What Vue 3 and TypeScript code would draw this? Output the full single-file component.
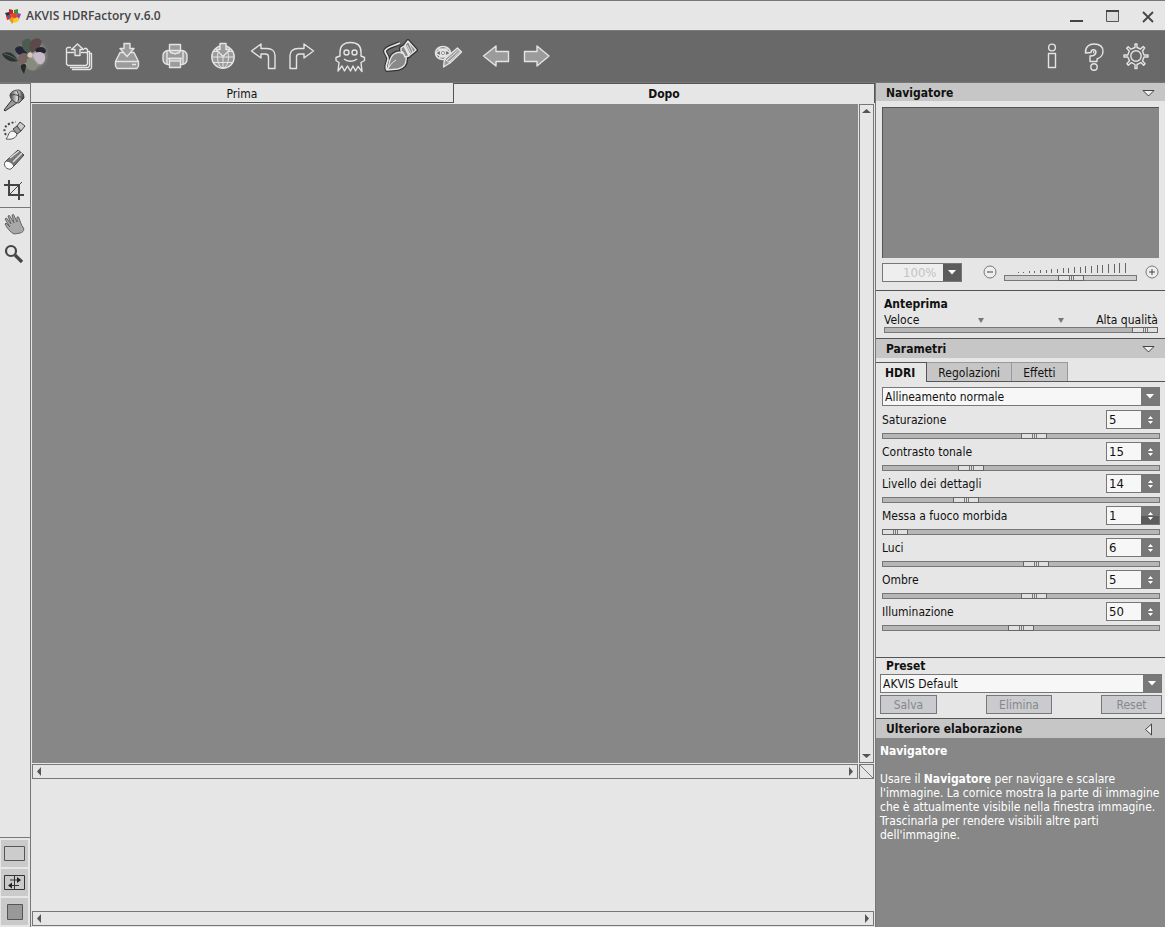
<script setup lang="ts">
import { ref } from 'vue'

interface Param {
  id: string
  label: string
  value: number
  pos: number
  pressed?: boolean
}

const params = ref<Param[]>([
  { id: 'saturation', label: 'Saturazione', value: 5, pos: 139 },
  { id: 'contrast', label: 'Contrasto tonale', value: 15, pos: 76 },
  { id: 'detail', label: 'Livello dei dettagli', value: 14, pos: 71 },
  { id: 'soft', label: 'Messa a fuoco morbida', value: 1, pos: 0, pressed: true },
  { id: 'lights', label: 'Luci', value: 6, pos: 141 },
  { id: 'shadows', label: 'Ombre', value: 5, pos: 139 },
  { id: 'illumination', label: 'Illuminazione', value: 50, pos: 126 },
])

const zoomPos = ref(54)
const quality = ref(100)
const ticks = Array.from({ length: 20 }, (_, i) => ({
  x: 1.5 + i * 5.65,
  h: i < 2 ? 1 : Math.round(1 + (i - 1) * 0.5),
}))
</script>

<template>
  <div class="app">
    <header class="titlebar">
      <svg class="logo" width="18" height="18" viewBox="0 0 18 18">
        <path d="M1 6l4-1 2 4-4 1z" fill="#333" />
        <path d="M5 2l4 1v5L5 7z" fill="#c22" />
        <path d="M10 3l4-1v5l-4 2z" fill="#2a9a3a" />
        <path d="M14 6l3 1-2 5-3-2z" fill="#a33ab0" />
        <path d="M2 9l5-1v4l-4 1z" fill="#d33" />
        <circle cx="10" cy="9" r="3" fill="#e8442a" />
        <path d="M5 12l4-2 2 3-3 4z" fill="#e89a20" />
        <path d="M9 12l5-2 1 4-5 2z" fill="#f0d020" />
        <path d="M4 8h2v3H4z" fill="#36c" />
      </svg>
      <h1 class="title">AKVIS HDRFactory v.6.0</h1>
      <div class="winbtns">
        <button aria-label="Riduci a icona"><svg width="16" height="16" viewBox="0 0 16 16"><path d="M2 13h13" stroke="#444" stroke-width="2" /></svg></button>
        <button aria-label="Ingrandisci"><svg width="16" height="16" viewBox="0 0 16 16"><path d="M2.500 3.500h12v10h-12z" fill="#dcdcdc" stroke="#555" /><path d="M2 3h13" stroke="#444" stroke-width="2" /></svg></button>
        <button aria-label="Chiudi"><svg width="16" height="16" viewBox="0 0 16 16"><path d="M3 4l10 10M13 4L3 14" stroke="#444" stroke-width="1.800" /></svg></button>
      </div>
    </header>

    <nav class="toolbar">
      <svg class="flower" width="46" height="38" viewBox="0 0 46 38">
        <defs><radialGradient id="glow"><stop offset=".6" stop-color="#aaa" stop-opacity=".8" /><stop offset="1" stop-color="#777" stop-opacity="0" /></radialGradient></defs>
        <ellipse cx="30" cy="18" rx="18" ry="17" fill="url(#glow)" />
        <path d="M0 17c6-4 12-1 16 7-7 2-13-1-16-7z" fill="#2b3430" />
        <path d="M2 17c5 1 9 3 13 6" stroke="#59665d" fill="none" />
        <path d="M13 12c3-5 10-3 13 5-6 3-12 1-13-5z" fill="#23263a" />
        <path d="M20 5c4-5 10-4 10 2 1 4-1 8-3 9-5-1-8-6-7-11z" fill="#4b5d4e" />
        <path d="M30 3c6-3 11-1 9 4-1 4-5 7-9 9-3-3-3-9 0-13z" fill="#5d484b" />
        <path d="M33 13c3-4 10-4 11 1 0 3-5 3-9 2z" fill="#23262f" />
        <path d="M31 18c4-5 12-3 12 2 1 4-3 9-6 7-3-2-5-5-6-9z" fill="#c6bac6" />
        <path d="M16 22c0-6 7-8 12-4 0 5-3 9-8 9-3 0-4-2-4-5z" fill="#75645f" />
        <path d="M26 21c5-1 10 5 9 10-2 4-8 3-10-1-1-3-1-6 1-9z" fill="#868b7b" />
        <path d="M19 28c3-2 6-1 5 2l-2 7c-1-3-4-5-3-9z" fill="#262b2a" />
        <circle cx="28" cy="18" r="2.600" fill="#d3cab2" />
      </svg>
      <button class="tb w48" aria-label="Apri"><svg width="30" height="30" viewBox="0 0 30 30"><path d="M7 6.500H3.500l-1 1V23l1.500 1.500h18l1.500-1.500V9l-1-1.500H20" /><path d="M2.500 11.500H10M17 11.500h6.500M23.500 10.500h2V25l-1.500 1.500H6M25.500 12.500h2V27L26 28.500H8" /><path d="M11 14.500h5v-6h3.500L13.500 3 7.500 8.500H11z" fill="#777" /></svg></button>
      <button class="tb w48" aria-label="Salva"><svg width="30" height="30" viewBox="0 0 30 30"><path class="f" d="M8 11.500h14l4.500 9V25L25 27.500H5L3.500 25v-4.500z" /><path d="M3.500 20.500h23M20 23.500h4" /><path class="f" d="M12 2.500h6v5h4l-7 8-7-8h4z" /></svg></button>
      <button class="tb w48" aria-label="Stampa"><svg width="30" height="30" viewBox="0 0 30 30"><rect class="f" x="3" y="9.500" width="24" height="14" rx="5" /><path class="f" d="M9.500 3.500h11v6h-11z" /><path d="M9.500 9.500c1 4 10 4 11 0M7 10v13M23 10v13" /><path class="f" d="M9.500 17.500h11v9h-11z" /><path d="M8 17.500h14M15 12v1.500M9.500 20h11" /></svg></button>
      <button class="tb w48" aria-label="Pubblica"><svg width="30" height="30" viewBox="0 0 30 30"><circle class="f" cx="15" cy="16" r="11.200" /><ellipse cx="15" cy="16" rx="5.500" ry="11" stroke-width="1" /><path d="M15 5v22M4 16h22M6 21.500h18M6 10.500h18" stroke-width="1" /><path class="f" d="M12 2.500h6v6h4l-7 7-7-7h4z" /></svg></button>
      <button class="tb w34" aria-label="Annulla"><svg width="30" height="30" viewBox="0 0 30 30"><path d="M2.500 10L12 3v4.500h6c5 0 8 3 8 7V27.500h-6.500V16c0-2-1-3-3-3H12V17z" /></svg></button>
      <button class="tb w43" aria-label="Ripeti"><svg width="30" height="30" viewBox="0 0 30 30"><path d="M26.500 10L17 3v4.500h-6c-5 0-8 3-8 7V27.500h6.500V16c0-2 1-3 3-3H17V17z" /></svg></button>
      <button class="tb w53" aria-label="Fantasma"><svg width="32" height="34" viewBox="0 0 32 34"><path d="M6 16V13C6 6 11 3.500 16.500 3.500S27 6 27 13v4l3.500 1.500v3L27 23.500l1 9-4-5-2.500 4.500-2.500-5-2.500 5-3-5-3 5-2.500-5-4 5 1-8.500L2 21.500v-3L6 17z" /><circle cx="12.500" cy="13.500" r="2.500" /><circle cx="20.500" cy="13.500" r="2.500" /><path d="M10 20c3 3 10 3 13 0" /></svg></button>
      <button class="tb w48" aria-label="Pennello"><svg width="36" height="34" viewBox="0 0 36 34">
        <g class="shade"><path d="M18 4C12 7 4 8 3 12c0 3 4 5 3 9s-3 7-1 10" /><path d="M5 31c3-4 1-12 7-16 3-2 6-2 8-1 3 1 5 4 4 7 0 6-4 8-8 9z" /><path d="M19 9l3-2 5 10-4 1c-1-3-2-5-4-6zM23 6l3-4 8 9-6 5z" /></g>
        <path d="M18 4C12 7 4 8 3 12c0 3 4 5 3 9s-3 7-1 10" stroke-width="1.800" />
        <path d="M5 31c3-4 1-12 7-16 3-2 6-2 8-1 3 1 5 4 4 7 0 6-4 8-8 9z" fill="#888" />
        <path d="M5 31c3-4 5-8 9-10" stroke-width="1" />
        <path d="M19 9l3-2 5 10-4 1c-1-3-2-5-4-6zM23 6l3-4 8 9-6 5z" fill="#888" />
        <path d="M25 6l4 8M27 4l4 9" stroke-width="1" />
      </svg></button>
      <button class="tb w48" aria-label="Modifica"><svg width="30" height="30" viewBox="0 0 30 30"><ellipse cx="10" cy="12" rx="7.500" ry="6.500" stroke-width="1.600" /><path d="M3 12c3-4 11-4 14 0M3 12c3 4 11 4 14 0M5 8h10M6 16h8" /><circle cx="10" cy="12" r="2.500" fill="#555" /><circle cx="10" cy="12" r=".6" /><path class="f" d="M24.500 7l4 4-11.500 11-6.500 4 1-8z" /><path d="M14 19L25.500 9M16 21l11.500-11M11.500 18l5.500 4" stroke-width="1" /></svg></button>
      <button class="tb w48" aria-label="Precedente"><svg width="30" height="30" viewBox="0 0 30 30"><path class="f" d="M2.500 15L15 5v5.500h12.500v10H15V25z" /></svg></button>
      <button class="tb w34" aria-label="Successivo"><svg width="30" height="30" viewBox="0 0 30 30"><path class="f" d="M27 15L15 5v5.500H2.500v10H15V25z" /></svg></button>
      <span class="spring"></span>
      <button class="tb w43" aria-label="Informazioni"><svg width="30" height="30" viewBox="0 0 30 30"><circle cx="15" cy="6.500" r="3.400" /><path d="M11.500 12.500h7v14h-7z" /></svg></button>
      <button class="tb w43" aria-label="Aiuto"><svg width="30" height="32" viewBox="0 0 30 32"><path d="M6.500 13C6 7 10 4 15 4c6 0 9 3 9 7.500s-3 6-6 7.500v2.500h-7V16c4 0 6-1.500 6-4 0-3-5-3-5 .5z" /><circle cx="15.500" cy="12" r="1.200" stroke-width="1" /><circle cx="15" cy="27" r="3.200" /></svg></button>
      <button class="tb w43" aria-label="Impostazioni"><svg width="30" height="30" viewBox="0 0 30 30"><circle cx="15" cy="15" r="5.200" /><path d="M14 3h2v3.500l3.500 1.500 2.700-2.600 1.500 1.500L21.500 10l1.500 4h4v2h-4l-1.500 4 2.600 2.700-1.500 1.500-2.700-2.600-3.900 1.900v4h-2v-4l-3.700-1.900-2.900 2.600-1.500-1.500 2.600-2.900L6.800 16H3v-2h3.800l1.500-4-2.600-2.700 1.500-1.500L10 8.200l4-1.700z" /></svg></button>
    </nav>

    <div class="body">
      <aside class="tools">
        <button class="tool" aria-label="Punta"><svg width="24" height="24" viewBox="0 0 24 24"><defs><linearGradient id="pin"><stop offset="0" stop-color="#444" /><stop offset=".5" stop-color="#ddd" /><stop offset="1" stop-color="#333" /></linearGradient></defs><path d="M11 10l5 4-4 3-9 6-1-1 7-9z" fill="#999" stroke="#333" /><path d="M8 7c1-4 5-5 9-5 3 1 5 4 5 8l-5 5c-5 0-9-4-9-8z" fill="url(#pin)" stroke="#444" /><path d="M9 7c4-1 8 0 12 4M15 3c2 3 2 7 1 11" stroke="#444" fill="none" /></svg></button>
        <button class="tool" aria-label="Pennello storico"><svg width="24" height="24" viewBox="0 0 24 24"><path d="M4 17c-4-6 0-12 10-13" fill="none" stroke="#444" stroke-width="2" stroke-dasharray="2 2" /><path d="M4 21c3-3 2-8 7-8l4 2c0 5-5 7-11 6z" fill="#f6f6f6" stroke="#555" /><path d="M11 11l4-3 4 5-4 3z" fill="#999" stroke="#444" /><path d="M15 8l3-4 5 4-4 5z" fill="#ccc" stroke="#444" /></svg></button>
        <button class="tool" aria-label="Gomma"><svg width="24" height="24" viewBox="0 0 24 24"><path d="M4 13L16 2l6 5-10 11z" fill="#777" stroke="#444" /><path d="M8 10L17 3M11 14l9-9" stroke="#ddd" stroke-width="1.500" /><path d="M4 13c3 0 7 2 8 5l-3 3c-4 1-8-3-6-7z" fill="#fff" stroke="#555" /></svg></button>
        <button class="tool" aria-label="Ritaglia"><svg width="24" height="24" viewBox="0 0 24 24"><path d="M2 7h15v15M7 2v15h15" fill="none" stroke="#444" stroke-width="2" /><path d="M6 18L20 4" stroke="#444" /></svg></button>
        <div class="toolsep"></div>
        <button class="tool" aria-label="Mano"><svg width="24" height="24" viewBox="0 0 24 24"><path d="M12 22C8 20 5 16 3 12l1-1 4 4-5-8 1.500-1L9 12 6 4l1.500-.5L12 11l-2-8 1.500-.5L15 10V5h1.500l3 8 2 3c1 3-1 4-3 5z" fill="#a8a8a8" stroke="#666" /></svg></button>
        <button class="tool" aria-label="Zoom"><svg width="24" height="24" viewBox="0 0 24 24"><circle cx="9" cy="9" r="5" fill="none" stroke="#444" stroke-width="2.200" /><path d="M13 13l7 7" stroke="#444" stroke-width="3.200" /></svg></button>
        <div class="spring"></div>
        <div class="views">
          <button aria-label="Vista singola"><svg width="21" height="15" viewBox="0 0 21 15"><path d="M.5.5h20v14H.5z" fill="#ccc" stroke="#555" /></svg></button>
          <button aria-label="Vista divisa"><svg width="21" height="15" viewBox="0 0 21 15"><path d="M.5.5h20v14H.5z" fill="none" stroke="#333" /><path d="M10.500 0v15M6 5h10M5 10.500h10" stroke="#333" /><path d="M13 2l4 3-4 3zM8 7.500l-4 3 4 3z" fill="#222" /></svg></button>
          <button aria-label="Sfondo"><svg width="16" height="16" viewBox="0 0 16 16"><path d="M.5.5h15v15H.5z" fill="#999" stroke="#555" /></svg></button>
        </div>
      </aside>

      <main class="center">
        <div class="tabs">
          <button class="tab">Prima</button>
          <button class="tab on">Dopo</button>
        </div>
        <div class="view">
          <div class="canvas"></div>
          <div class="vbar">
            <svg width="9" height="6" viewBox="0 0 9 6"><path d="M0 5h9L4.500 1z" fill="#555" /></svg>
            <svg width="9" height="6" viewBox="0 0 9 6"><path d="M0 1h9L4.500 5z" fill="#555" /></svg>
          </div>
          <div class="hbar">
            <svg width="6" height="9" viewBox="0 0 6 9"><path d="M5 0v9L1 4.500z" fill="#555" /></svg>
            <svg width="6" height="9" viewBox="0 0 6 9"><path d="M1 0v9l4-4.500z" fill="#555" /></svg>
          </div>
          <div class="corner"><svg width="13" height="13" viewBox="0 0 13 13"><path d="M0 0l13 13" stroke="#777" /></svg></div>
        </div>
        <div class="strip"></div>
        <div class="hbar">
          <svg width="6" height="9" viewBox="0 0 6 9"><path d="M5 0v9L1 4.500z" fill="#555" /></svg>
          <svg width="6" height="9" viewBox="0 0 6 9"><path d="M1 0v9l4-4.500z" fill="#555" /></svg>
        </div>
      </main>

      <aside class="side">
        <section>
          <h2 class="head"><span>Navigatore</span><svg width="13" height="8" viewBox="0 0 13 8"><path d="M1 1.500h11L6.500 7z" fill="#eee" stroke="#444" /></svg></h2>
          <div class="map"></div>
          <div class="zoomrow">
            <div class="combo disabled">
              <select aria-label="Scala" disabled><option>100%</option></select>
              <span class="arrow"><svg width="8" height="5" viewBox="0 0 8 5"><path d="M0 0h8L4 4.500z" fill="#fff" /></svg></span>
            </div>
            <button class="round" aria-label="Riduci"><svg width="14" height="14" viewBox="0 0 14 14"><circle cx="7" cy="7" r="6" fill="#eee" stroke="#777" /><path d="M4 7h6" stroke="#444" /></svg></button>
            <div class="scale">
              <svg class="ticks" width="114" height="11" viewBox="0 0 114 11"><path v-for="t in ticks" :key="t.x" :d="`M${Math.round(t.x) + 0.5} 10v-${t.h}`" stroke="#666" /></svg>
              <input v-model="zoomPos" class="range light" type="range" min="0" max="107" aria-label="Zoom" />
            </div>
            <button class="round" aria-label="Aumenta"><svg width="14" height="14" viewBox="0 0 14 14"><circle cx="7" cy="7" r="6" fill="#eee" stroke="#777" /><path d="M4 7h6M7 4v6" stroke="#444" /></svg></button>
          </div>
        </section>

        <section class="preview">
          <h3>Anteprima</h3>
          <div class="quality">
            <label for="quality">Veloce</label>
            <svg width="7" height="6" viewBox="0 0 7 6"><path d="M0 1h6L3 6z" fill="#777" /></svg>
            <svg width="7" height="6" viewBox="0 0 7 6"><path d="M0 1h6L3 6z" fill="#777" /></svg>
            <span>Alta qualità</span>
          </div>
          <input id="quality" v-model="quality" class="range" type="range" min="0" max="100" />
        </section>

        <section class="params">
          <h2 class="head lined"><span>Parametri</span><svg width="13" height="8" viewBox="0 0 13 8"><path d="M1 1.500h11L6.500 7z" fill="#eee" stroke="#444" /></svg></h2>
          <div class="ptabs">
            <button class="ptab on">HDRI</button>
            <button class="ptab">Regolazioni</button>
            <button class="ptab">Effetti</button>
          </div>
          <div class="fields">
            <div class="combo">
              <select aria-label="Allineamento"><option>Allineamento normale</option></select>
              <span class="arrow"><svg width="8" height="5" viewBox="0 0 8 5"><path d="M0 0h8L4 4.500z" fill="#fff" /></svg></span>
            </div>
            <div v-for="p in params" :key="p.id" class="param">
              <div class="prow">
                <label :for="p.id">{{ p.label }}</label>
                <div class="spin">
                  <input :id="p.id" v-model="p.value" type="text" />
                  <div class="updown">
                    <button aria-label="Più" @click="p.value++"><svg width="5" height="3" viewBox="0 0 5 3"><path d="M0 3h5L2.500 0z" fill="#fff" /></svg></button>
                    <button aria-label="Meno" :class="{ pressed: p.pressed }" @click="p.value--"><svg width="5" height="3" viewBox="0 0 5 3"><path d="M0 0h5L2.500 3z" fill="#fff" /></svg></button>
                  </div>
                </div>
              </div>
              <input v-model="p.pos" class="range" type="range" min="0" max="252" :aria-label="p.label" />
            </div>
          </div>
        </section>

        <section class="preset">
          <label class="ptitle" for="preset">Preset</label>
          <div class="combo">
            <select id="preset"><option>AKVIS Default</option></select>
            <span class="arrow"><svg width="8" height="5" viewBox="0 0 8 5"><path d="M0 0h8L4 4.500z" fill="#fff" /></svg></span>
          </div>
          <div class="btns">
            <button class="s" disabled>Salva</button>
            <button class="m" disabled>Elimina</button>
            <button class="l" disabled>Reset</button>
          </div>
        </section>

        <h2 class="head lined"><span>Ulteriore elaborazione</span><svg width="13" height="13" viewBox="0 0 13 13"><path d="M9.500 1v11L3.500 6.500z" fill="#eee" stroke="#444" /></svg></h2>
        <section class="info">
          <h3>Navigatore</h3>
          <p>Usare il <b>Navigatore</b> per navigare e scalare<br />l'immagine. La cornice mostra la parte di immagine<br />che è attualmente visibile nella finestra immagine.<br />Trascinarla per rendere visibili altre parti<br />dell'immagine.</p>
        </section>
      </aside>
    </div>
  </div>
</template>

<style>
body {
  margin: 0;
}
</style>

<style scoped>
* {
  box-sizing: border-box;
}
.app {
  display: flex;
  flex-direction: column;
  min-height: 100vh;
  background: #e6e6e6;
  color: #111;
  font: 12px/14px 'DejaVu Sans Condensed', 'DejaVu Sans', sans-serif;
}
button, input, select {
  margin: 0;
  padding: 0;
  border: 0;
  border-radius: 0;
  background: none;
  font: inherit;
  color: inherit;
}
svg {
  display: block;
  flex: none;
}
h1, h2, h3, p {
  margin: 0;
  font-size: 12px;
}
.spring {
  flex: 1;
}
.titlebar {
  display: flex;
  align-items: center;
  height: 30px;
  padding: 0 9px 0 4px;
  border-top: 1px solid #777;
}
.title {
  flex: 1;
  margin-left: 4px;
  color: #444;
  font: 600 12px/16px 'Open Sans', sans-serif;
}
.winbtns {
  display: flex;
  gap: 20px;
}
.toolbar {
  display: flex;
  align-items: center;
  height: 53px;
  padding: 0 8px 2px 2px;
  background: #696969;
  border-top: 1px solid #7c7c7c;
  border-bottom: 1px solid #777;
}
.flower {
  margin-right: 7px;
}
.tb {
  display: flex;
  justify-content: center;
}
.tb svg {
  fill: none;
  stroke: #e4e4e4;
  stroke-width: 1.4;
  stroke-linejoin: round;
}
.tb .f {
  fill: #9b9b9b;
}
.shade {
  stroke: #333;
  stroke-width: 4;
}
.w48 { width: 48px; }
.w34 { width: 34px; }
.w43 { width: 42px; }
.w53 { width: 53px; }
.body {
  display: grid;
  grid-template-columns: 31px minmax(0, 1fr) 290px;
  flex: 1;
}
.tools {
  display: flex;
  flex-direction: column;
  border-top: 1px solid #777;
  border-right: 1px solid #777;
}
.tool {
  display: flex;
  justify-content: center;
  padding: 4px 0 2px;
  margin-right: 2px;
}
.toolsep {
  height: 1px;
  margin: 3px 0 0;
  background: #777;
}
.views {
  display: flex;
  flex-direction: column;
  gap: 2px;
  padding: 2px 1px;
  border-top: 1px solid #777;
}
.views button {
  display: flex;
  align-items: center;
  justify-content: center;
  width: 27px;
  height: 27px;
  background: #cacaca;
}
.center {
  display: flex;
  flex-direction: column;
  padding: 0 1px 1px;
}
.tabs {
  display: grid;
  grid-template-columns: 1fr 1fr;
  height: 20px;
  margin: 0 -1px;
}
.tab {
  padding-top: 2px;
  border-bottom: 1px solid #555;
}
.tab.on {
  padding-top: 0;
  border: solid #555;
  border-width: 1px 1px 0;
  font-weight: bold;
}
.view {
  display: grid;
  grid-template-columns: minmax(0, 1fr) 15px;
  grid-template-rows: 1fr 15px;
  column-gap: 1px;
  row-gap: 1px;
  flex: 1;
  padding-top: 1px;
}
.canvas {
  background: #878787;
}
.vbar, .hbar, .corner {
  display: flex;
  border: 1px solid #777;
}
.vbar {
  flex-direction: column;
  align-items: center;
  justify-content: space-between;
  padding: 3px 0;
}
.hbar {
  align-items: center;
  justify-content: space-between;
  height: 15px;
  padding: 0 3px;
}
.strip {
  height: 132px;
}
.side {
  display: flex;
  flex-direction: column;
  border-left: 1px solid #777;
}
.head {
  display: flex;
  align-items: center;
  justify-content: space-between;
  height: 18px;
  padding: 1px 10px 0;
  background: #c6c6c6;
}
.head.lined {
  height: 20px;
  border-top: 1px solid #555;
}
.map {
  height: 151px;
  margin: 6px 6px 0;
  background: #878787;
  border: solid #555;
  border-width: 1px 0 0 1px;
}
.combo {
  display: grid;
  grid-template-columns: minmax(0, 1fr) 18px;
  height: 19px;
  border: 1px solid #777;
  background: #f7f7f7;
}
.combo select {
  grid-area: 1 / 1 / 2 / 3;
  min-width: 0;
  padding-left: 2px;
  appearance: none;
}
.arrow {
  grid-area: 1 / 2 / 2 / 3;
  display: flex;
  align-items: center;
  justify-content: center;
  background: #787878;
  pointer-events: none;
}
.combo.disabled {
  width: 80px;
  background: #eee;
}
.combo.disabled select {
  padding-left: 20px;
  color: #c3c3c3;
  opacity: 1;
  font-size: 13px;
}
.disabled .arrow {
  background: #5c5c5c;
}
.zoomrow {
  display: flex;
  align-items: center;
  height: 19px;
  margin: 5px 0 8px 6px;
}
.round {
  margin: 0 7px 1px 21px;
}
.scale {
  flex: 1;
  display: flex;
  flex-direction: column;
  align-self: flex-start;
}
.scale .ticks {
  margin: 0 0 1px 12px;
}
.scale + .round {
  margin: 0 6px 1px 8px;
}
.range {
  display: block;
  width: 100%;
  height: 6px;
  background: #b6b6b6;
  border: 1px solid #777;
  appearance: none;
  overflow: visible;
}
.range.light {
  background: #cfcfcf;
}
.range::-webkit-slider-runnable-track {
  height: 6px;
  margin: -1px;
}
.range::-webkit-slider-thumb {
  appearance: none;
  width: 26px;
  height: 6px;
  border: 1px solid #666;
  background: linear-gradient(90deg, transparent 10px, #777 10px, #777 11px, transparent 11px, transparent 12px, #777 12px, #777 13px, transparent 13px, transparent 14px, #777 14px, #777 15px, transparent 15px) #e0e0e0;
}
.preview {
  height: 48px;
  padding: 6px 7px 0 8px;
  border-top: 1px solid #555;
}
.quality {
  display: grid;
  grid-template-columns: 94px 80px 1fr auto;
  align-items: center;
  height: 16px;
  margin-top: 1px;
}
.preview .range {
  margin-top: -1px;
}
.ptabs {
  display: flex;
  height: 20px;
  margin-top: 4px;
  border-bottom: 1px solid #555;
}
.ptab {
  height: 19px;
  padding: 1px 11px 0;
  background: #c6c6c6;
  border: solid #999;
  border-width: 1px 1px 0 0;
}
.ptab.on {
  height: 20px;
  padding: 0 11px 0 9px;
  background: #e6e6e6;
  border-color: #555;
  font-weight: bold;
}
.fields {
  padding: 5px 5px 0 6px;
}
.param {
  padding: 4px 0 3px;
}
.param + .param {
  padding-top: 0;
}
.prow {
  display: flex;
  justify-content: space-between;
  height: 19px;
  margin-bottom: 4px;
  line-height: 20px;
}
.spin {
  display: flex;
  width: 54px;
  border: 1px solid #777;
  background: #f7f7f7;
}
.spin input {
  flex: 1;
  min-width: 0;
  padding: 1px 0 0 2px;
  font-size: 13px;
}
.updown {
  display: flex;
  flex-direction: column;
  width: 18px;
  background: #787878;
}
.updown button {
  flex: 1;
  display: flex;
  align-items: flex-end;
  justify-content: center;
  padding: 1px 0;
}
.updown button + button {
  align-items: flex-start;
}
.updown .pressed {
  background: #5c5c5c;
}
.preset {
  height: 61px;
  margin-top: 23px;
  padding: 1px 3px 0 4px;
  border-top: 1px solid #555;
}
.ptitle {
  display: block;
  padding-left: 6px;
  margin-bottom: 1px;
  font-weight: bold;
}
.btns {
  display: flex;
  justify-content: space-between;
  margin-top: 2px;
}
.btns button {
  height: 19px;
  border: 1px solid #777;
  background: #cacbcf;
  color: #888;
}
.s { width: 57px; }
.m { width: 66px; }
.l { width: 61px; }
.info {
  flex: 1;
  padding: 6px 4px;
  background: #878787;
  color: #fff;
}
.info p {
  margin-top: 14px;
}
</style>
